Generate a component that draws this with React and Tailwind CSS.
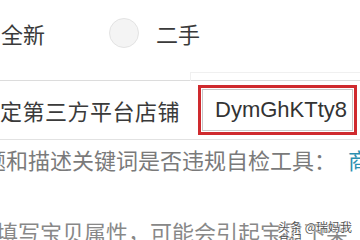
import React from 'react';

function Radio() {
  return (
    <span className="w-[30px] h-[30px] rounded-full border border-[#e3e3e3] bg-[#f4f4f4] inline-block" />
  );
}

export default function App() {
  const font = { fontFamily: '"Noto Sans CJK SC", "Noto Sans", sans-serif' };
  return (
    <div className="w-[360px] h-[240px] overflow-hidden bg-white text-[#3a3a3a] relative" style={font}>
      {/* condition row */}
      <div className="h-[66px] flex items-center">
        <span className="text-[22px] leading-none ml-[1px] w-[108px]">全新</span>
        <Radio />
        <span className="text-[22px] leading-none ml-[17px]">二手</span>
      </div>
      <div className="h-[15px] border-b border-[#dcdcdc] flex justify-end">
        <div className="w-[170px] h-[9px] mt-[6px] border-t border-l border-[#f0f0f0]" />
      </div>

      {/* shop row */}
      <div className="h-[59px] flex items-center border-b border-[#e2e2e2]">
        <span className="text-[22px] leading-none tracking-[0.5px] w-[198px]">定第三方平台店铺</span>
        <div className="w-[159px] h-[50px] border-[3px] border-[#cf2a2e] p-[1px]">
          <div className="h-full border border-[#c8c8c8] flex items-center pl-[12px] text-[22px] leading-none text-[#333] font-['Liberation_Sans',Arial,sans-serif]">
            DymGhKTty8
          </div>
        </div>
      </div>

      {/* check tool row */}
      <div className="h-[38px] flex items-center whitespace-nowrap text-[22px] leading-none text-[#7a7a7a] ml-[-16px]">
        <span>题和描述关键词是否违规自检工具：</span>
        <span className="text-[#2b8fb0] ml-[12px]">商</span>
      </div>

      <div className="h-[42px]" />

      {/* bottom row */}
      <div className="flex whitespace-nowrap text-[22px] leading-none text-[#888] ml-[-4px]">
        <span>填写宝贝属性，可能会引起宝贝下架</span>
      </div>

      <span className="absolute left-[278px] top-[221px] text-[12px] leading-none text-[#555]" style={{ textShadow: '0 0 2px #fff, 0 0 2px #fff, 0 0 1px #fff' }}>
        头条 @瑞妈我食记
      </span>
    </div>
  );
}
